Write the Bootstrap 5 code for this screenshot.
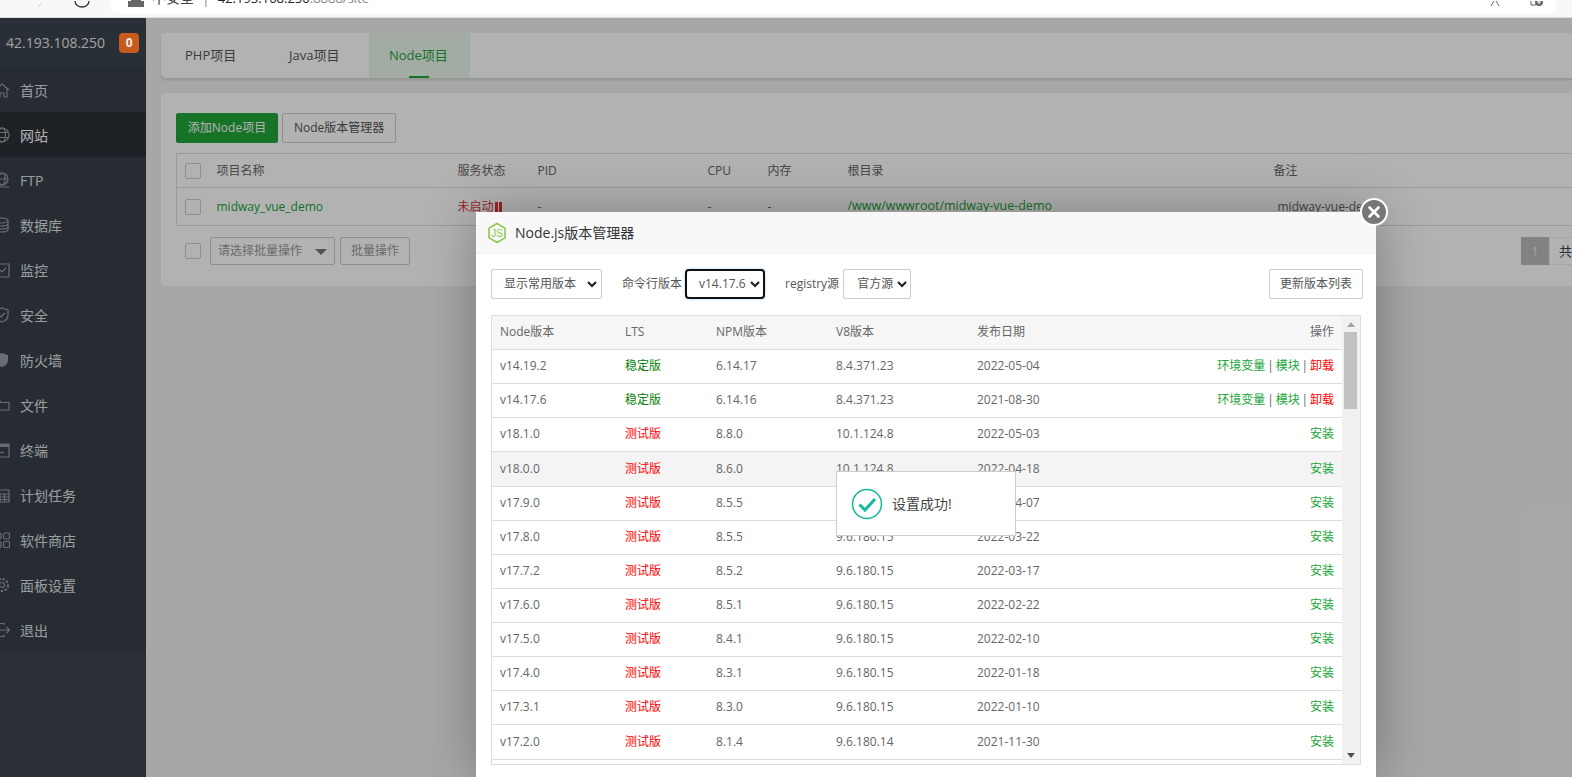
<!DOCTYPE html>
<html lang="zh-CN">
<head>
  <meta charset="UTF-8">
  <meta name="viewport" content="width=device-width, initial-scale=1">
  <title>Node.js版本管理器</title>
  <link rel="stylesheet" href="https://cdn.jsdelivr.net/npm/bootstrap@5.3.0/dist/css/bootstrap.min.css">
  <style>
    html, body { height: 777px; overflow: hidden; }
    body {
      font-family: "Open Sans", "Noto Sans CJK SC", sans-serif;
      font-size: 12px;
      color: #666;
      background: #f0f0f0;
    }
    /* browser chrome, cut off by the screenshot */
    .chrome { height: 18px; background: #f7f8f9; border-bottom: 1px solid #ddd; overflow: hidden; }
    .nav-ico { width: 110px; flex-shrink: 0; }
    .addr {
      flex: 1; height: 13px; margin-right: 16px; background: #fff;
      border-radius: 0 0 6px 6px; overflow: hidden; font-size: 14px; line-height: 18px; color: #444;
    }
    .addr-in { margin-top: -11px; padding-left: 18px; gap: 8px; }
    .addr .sep { color: #888; margin: 0 8px; }
    .addr b { font-weight: 400; font-size: 13px; color: #222; }
    .addr i { font-style: normal; font-size: 13px; color: #888; }
    .addr-icons { margin-left: auto; margin-top: 11px; padding-right: 12px; gap: 30px; }

    .app { height: 759px; overflow: hidden; }

    /* sidebar */
    .side { width: 146px; flex-shrink: 0; background: #38404a; color: #dde0e3; }
    .side-head { height: 51px; padding-left: 6px; background: #3c444e; color: #e6e6e6; font-size: 14px; }
    .side-head .count {
      position: relative; z-index: 2;
      width: 20px; height: 20px; margin-left: 14px; border-radius: 4px;
      background: #c85a1c; color: #eee; font-size: 12px; font-weight: 700; text-align: center; line-height: 20px;
    }
    .side-item { height: 45px; font-size: 14px; gap: 10px; }
    .side-item span { padding-top: 2px; }
    .side-item svg { width: 16px; height: 16px; margin-left: -6px; flex-shrink: 0; }
    .side-item.active { background: #2b3036; color: #fff; }
    .side-foot { background: #3e4650; height: 130px; }

    /* page */
    .main { min-width: 0; overflow: hidden; padding: 15px 0 0 15px; }
    .panel { width: 1454px; background: #fff; border-radius: 5px; }
    .tabs-panel { height: 45px; margin-bottom: 15px; box-shadow: 0 2px 3px rgba(0,0,0,.12); }
    .tab { width: 104px; height: 45px; padding-left: 24px; font-size: 13px; color: #555; line-height: 45px; }
    .tab.active { position: relative; width: 101px; padding-left: 20px; background: #e9f6ec; color: #20a53a; }
    .tab.active::after {
      content: ""; position: absolute; left: 40px; bottom: 0; width: 20px; height: 2px; background: #20a53a;
    }
    .content-panel { height: 193px; padding: 20px 15px 0; }
    .btn-bt { height: 30px; padding: 0 11px; font-size: 12px; border-radius: 2px; line-height: 28px; }
    .btn-green { width: 102px; padding: 0; background: #20a53a; border: 1px solid #20a53a; color: #fff; }
    .btn-plain { background: #fff; border: 1px solid #ccc; color: #555; }
    .site-table { table-layout: fixed; width: 100%; margin: 10px 0 11px; border: 1px solid #ddd; border-bottom-width: 1px; }
    .site-table col:nth-child(1) { width: 32px; }
    .site-table col:nth-child(2) { width: 241px; }
    .site-table col:nth-child(3) { width: 80px; }
    .site-table col:nth-child(4) { width: 170px; }
    .site-table col:nth-child(5) { width: 60px; }
    .site-table col:nth-child(6) { width: 80px; }
    .site-table col:nth-child(7) { width: 426px; }
    .site-table th, .site-table td { padding: 0 8px; border-bottom: 1px solid #ddd; font-weight: 400; white-space: nowrap; }
    .site-table th { height: 34px; color: #666; }
    .site-table td { height: 38px; }
    .site-table .form-check-input, .batch .form-check-input { width: 16px; height: 16px; margin: 0; border-color: #ccc; border-radius: 2px; display: block; }
    .link-green { color: #20a53a; }
    .path-cell { font-size: 12.5px; }
    .site-table td.note-cell { padding-left: 12px; }
    .stopped { color: #d9363e; }
    .bars { display: inline-block; width: 8px; height: 10px; margin-left: 1px; vertical-align: -1px;
      background: linear-gradient(90deg, #d9363e 0 3px, transparent 3px 4px, #d9363e 4px 7px, transparent 7px); }
    .batch { height: 28px; padding-left: 9px; }
    .batch-select {
      width: 125px; height: 28px; margin-left: 9px; padding: 0 7px; border: 1px solid #ccc; border-radius: 2px;
      color: #999; line-height: 26px; position: relative;
    }
    .batch-select::after {
      content: ""; position: absolute; right: 7px; top: 11px;
      border: 6px solid transparent; border-top: 6px solid #777; border-bottom: 0;
    }
    .batch-btn { width: 70px; height: 28px; margin-left: 5px; border: 1px solid #ccc; border-radius: 2px; color: #999; text-align: center; line-height: 26px; }
    .pager { margin-left: auto; font-size: 13px; }
    .pager span { display: block; height: 28px; line-height: 28px; text-align: center; }
    .pager .cur { width: 28px; background: #bbb; color: #e8e8e8; }
    .pager .num { width: 51px; border: 1px solid #eee; padding-left: 9px; text-align: left; color: #444; line-height: 26px; }

    /* layer over the page */
    .shade { position: absolute; left: 0; right: 0; top: 18px; bottom: 0; background: rgba(0,0,0,.3); }
    .layer {
      position: absolute; left: 476px; top: 212px; width: 900px; height: 565px; background: #fff;
      box-shadow: 1px 1px 50px rgba(0,0,0,.3);
    }
    .layer-head { height: 42px; padding-left: 11px; background: #f8f8f8; border-bottom: 1px solid #eee; font-size: 14px; color: #333; gap: 8px; }
    .layer-close {
      position: absolute; left: 884px; top: -14px; width: 28px; height: 28px; border-radius: 50%;
      background: #777; border: 2px solid #fff;
    }
    .layer-body { padding: 15px; }
    .tools { height: 30px; margin-bottom: 16px; color: #555; }
    .tools .form-select {
      width: auto; height: 30px; padding: 0 24px 0 12px; font-size: 12px; color: #555;
      border: 1px solid #ccc; border-radius: 2px; background-size: 10px 10px; background-position: right 4px center;
      background-image: url("data:image/svg+xml,%3csvg xmlns='http://www.w3.org/2000/svg' viewBox='0 0 10 10'%3e%3cpath fill='none' stroke='%23222' stroke-width='2.200' d='M1 3l4 4 4-4'/%3e%3c/svg%3e");
    }
    .tools .form-select.focused { width: 80px; border: 2px solid #101010; border-radius: 4px; box-shadow: 0 0 3px rgba(102,175,233,.6); padding: 0 12px 0 12px; background-position: right 3px center; }
    .tools .form-select.narrow { width: 68px; padding: 0 12px 0 13px; background-position: right 3px center; }
    .tools label { margin: 0 4px 0 20px; }
    .tools label:first-of-type { margin-right: 3px; }
    .btn-update { margin-left: auto; margin-right: -2px; width: 94px; height: 30px; padding: 0; font-size: 12px; text-align: center; line-height: 28px; color: #555; border-radius: 2px; }

    .ver-wrap { height: 450px; width: 870px; border: 1px solid #ddd; overflow: hidden; }
    .ver-table { table-layout: fixed; width: 851px; }
    .ver-table col:nth-child(1) { width: 125px; }
    .ver-table col:nth-child(2) { width: 91px; }
    .ver-table col:nth-child(3) { width: 120px; }
    .ver-table col:nth-child(4), .ver-table col:nth-child(5) { width: 141px; }
    .ver-table th, .ver-table td { padding: 0 8px; border-bottom: 1px solid #ddd; font-weight: 400; white-space: nowrap; box-sizing: border-box; }
    .ver-table th { height: 33px; background: #f6f6f6; color: #666; }
    .ver-table td { height: 34px; color: #666; }
    .ver-table tr.tall td { height: 35px; }
    .ver-table tr.hover td { background: #f4f4f4; }
    .ver-table td.stable { color: #008000; }
    .ver-table td.testing { color: #ff0000; }
    .ops { word-spacing: -1.25px; }
    .ops a { color: #20a53a; text-decoration: none; }
    .ops a.del { color: #ff0000; }
    .scroll { width: 18px; background: #f1f1f1; padding: 0 3px 0 2px; }
    .scroll .up, .scroll .down { width: 0; margin: 6px auto 5px; border: 4px solid transparent; }
    .scroll .up { border-bottom: 5px solid #a3a3a3; border-top: 0; }
    .scroll .down { margin: auto auto 6px; border-top: 5px solid #505050; border-bottom: 0; }
    .scroll .thumb { height: 77px; background: #c1c1c1; }

    .toast-msg {
      position: absolute; left: 836px; top: 471px; width: 180px; height: 65px; background: #fff;
      border: 1px solid #ccc; padding-left: 14px; gap: 9px; font-size: 14px; color: #444;
    }
  </style>
</head>
<body class="position-relative">

  <!-- browser chrome -->
  <div class="chrome d-flex">
    <div class="nav-ico position-relative">
      <svg width="110" height="17" viewBox="0 0 110 17">
        <path d="M38 6l4-4.500" stroke="#ddd" stroke-width="1.300" fill="none"/>
        <path d="M75 0a7 6 0 0 0 14 0" stroke="#333" stroke-width="1.300" fill="none"/>
      </svg>
    </div>
    <div class="addr">
      <div class="addr-in d-flex align-items-center">
        <svg width="16" height="18" viewBox="0 0 16 18"><path d="M0 12h16v6H0z" fill="#666"/><path d="M3 12V8h10v4" fill="#666"/></svg>
        <span>不安全<span class="sep">|</span><b>42.193.108.250</b><i>:8888/site</i></span>
        <div class="addr-icons d-flex">
          <svg width="10" height="6" viewBox="0 0 10 6"><path d="M4 0L1 5M6 0l3 5" stroke="#666" stroke-width="1" fill="none"/></svg>
          <svg width="14" height="6" viewBox="0 0 14 6"><path d="M1 0v4h5" stroke="#666" stroke-width="1" fill="none"/><circle cx="9" cy="1" r="4" fill="#666"/><path d="M7 1h4M9 0v3" stroke="#fff" stroke-width="1"/></svg>
        </div>
      </div>
    </div>
  </div>

  <div class="app d-flex">
    <!-- sidebar -->
    <aside class="side d-flex flex-column">
      <div class="side-head d-flex align-items-center">
        <span>42.193.108.250</span><span class="count">0</span>
      </div>
      <div id="menu"></div>
      <div class="side-foot"></div>
    </aside>

    <!-- page -->
    <main class="main flex-grow-1">
      <div class="panel tabs-panel d-flex">
        <div class="tab">PHP项目</div>
        <div class="tab">Java项目</div>
        <div class="tab active">Node项目</div>
      </div>
      <div class="panel content-panel">
        <div class="d-flex gap-1">
          <button type="button" class="btn btn-bt btn-green">添加Node项目</button>
          <button type="button" class="btn btn-bt btn-plain">Node版本管理器</button>
        </div>
        <table class="site-table">
          <colgroup><col><col><col><col><col><col><col><col></colgroup>
          <tr>
            <th><input class="form-check-input" type="checkbox"></th>
            <th>项目名称</th><th>服务状态</th><th>PID</th><th>CPU</th><th>内存</th><th>根目录</th><th>备注</th>
          </tr>
          <tr>
            <td><input class="form-check-input" type="checkbox"></td>
            <td class="link-green">midway_vue_demo</td>
            <td class="stopped">未启动<span class="bars"></span></td>
            <td>-</td><td>-</td><td>-</td>
            <td class="link-green path-cell">/www/wwwroot/midway-vue-demo</td>
            <td class="note-cell">midway-vue-demo</td>
          </tr>
        </table>
        <div class="batch d-flex align-items-center">
          <input class="form-check-input" type="checkbox">
          <div class="batch-select">请选择批量操作</div>
          <div class="batch-btn">批量操作</div>
          <div class="pager d-flex"><span class="cur">1</span><span class="num">共1条</span></div>
        </div>
      </div>
    </main>
  </div>

  <!-- modal layer -->
  <div class="shade"></div>
  <div class="layer">
    <div class="layer-head d-flex align-items-center">
      <svg width="20" height="22" viewBox="0 0 20 22">
        <path d="M10 1.500l8 4.600v9.800l-8 4.600-8-4.600V6.100z" fill="none" stroke="#8cc84b" stroke-width="1.600"/>
        <text x="10" y="15" text-anchor="middle" font-size="10" font-family="Liberation Sans" fill="#8cc84b">JS</text>
      </svg>
      <span>Node.js版本管理器</span>
    </div>
    <div class="layer-close">
      <svg class="d-block" width="24" height="24" viewBox="0 0 24 24"><path d="M7.500 7.500l9 9m0-9l-9 9" stroke="#fff" stroke-width="2.600" stroke-linecap="round"/></svg>
    </div>
    <div class="layer-body">
      <div class="tools d-flex align-items-center">
        <select class="form-select"><option>显示常用版本</option></select>
        <label>命令行版本</label>
        <select class="form-select focused"><option>v14.17.6</option></select>
        <label>registry源</label>
        <select class="form-select narrow"><option>官方源</option></select>
        <button type="button" class="btn btn-plain btn-update">更新版本列表</button>
      </div>
      <div class="ver-wrap d-flex">
        <table class="ver-table align-self-start">
          <colgroup><col><col><col><col><col><col></colgroup>
          <thead><tr><th>Node版本</th><th>LTS</th><th>NPM版本</th><th>V8版本</th><th>发布日期</th><th class="text-end">操作</th></tr></thead>
          <tbody id="versions"></tbody>
        </table>
        <div class="scroll d-flex flex-column">
          <div class="up"></div>
          <div class="thumb"></div>
          <div class="down"></div>
        </div>
      </div>
    </div>
  </div>

  <!-- toast -->
  <div class="toast-msg d-flex align-items-center">
    <svg width="32" height="32" viewBox="0 0 32 32">
      <circle cx="16" cy="16" r="14.500" fill="none" stroke="#16b99c" stroke-width="1.500"/>
      <path d="M8.500 16.500l5.500 5.500 10-11" fill="none" stroke="#16b99c" stroke-width="3"/>
    </svg>
    <span>设置成功!</span>
  </div>

<script src="https://cdn.jsdelivr.net/npm/bootstrap@5.3.0/dist/js/bootstrap.bundle.min.js"></script>
<script>
  // sidebar entries
  const s = 'fill="none" stroke="#989ca1" stroke-width="1.200"';
  const menu = [
    ["首页", `<path d="M1 8l7-6 7 6M3 7v8h3v-4h4v4h3V7" ${s}/>`],
    ["网站", `<circle cx="8" cy="8" r="7" ${s}/><ellipse cx="8" cy="8" rx="3.500" ry="7" ${s}/><path d="M1 5.500h14M1 10.500h14" ${s}/>`],
    ["FTP", `<circle cx="8" cy="7" r="6" ${s}/><ellipse cx="8" cy="7" rx="3" ry="6" ${s}/><path d="M2 7h12M1 15h14" ${s}/>`],
    ["数据库", `<ellipse cx="7" cy="3.500" rx="7" ry="2.500" ${s}/><path d="M0 3.500v9c0 1.400 3 2.500 7 2.500s7-1.100 7-2.500v-9M0 6.500c0 1.400 3 2.500 7 2.500s7-1.100 7-2.500M0 9.500c0 1.400 3 2.500 7 2.500s7-1.100 7-2.500" ${s}/>`],
    ["监控", `<path d="M1 2h14v13H1zM3 11l3-3 2 2 4-4" ${s}/>`],
    ["安全", `<path d="M8 1l6 2v5c0 4-3 6-6 7-3-1-6-3-6-7V3zM5 8l2 2 4-4" ${s}/>`],
    ["防火墙", `<path d="M8 1l6 2v5c0 4-3 6-6 7-3-1-6-3-6-7V3z" fill="#989ca1"/>`],
    ["文件", `<path d="M1 13V4h5l1 1.500h8V13z" ${s}/>`],
    ["终端", `<path d="M1 2h14v13H1z" ${s}/><path d="M1 2h14v3H1z" fill="#989ca1"/><path d="M6 10.500h4" ${s}/>`],
    ["计划任务", `<path d="M2 3h13v12H2zM2 7h13M2 10h13M2 12.500h13M6 7v8M10.500 7v8" ${s}/>`],
    ["软件商店", `<rect x="1" y="1" width="6" height="6" rx="1.500" ${s}/><rect x="9.500" y="1" width="6" height="6" rx="1.500" ${s}/><rect x="1" y="9.500" width="6" height="6" rx="1.500" ${s}/><rect x="9.500" y="9.500" width="6" height="6" rx="1.500" ${s}/>`],
    ["面板设置", `<circle cx="8" cy="8" r="2.500" ${s}/><circle cx="8" cy="8" r="6" stroke-dasharray="2.500 1.500" fill="none" stroke="#989ca1" stroke-width="2"/>`],
    ["退出", `<path d="M10 3V1.500H1v13h9V13M6 8h9M12.500 5l3 3-3 3" ${s}/>`]
  ];
  document.getElementById("menu").innerHTML = menu.map((m, i) =>
    `<div class="side-item d-flex align-items-center${i === 1 ? " active" : ""}"><svg viewBox="0 0 16 16">${m[1]}</svg><span>${m[0]}</span></div>`
  ).join("");

  // node versions: version, lts, npm, v8, date
  const versions = [
    ["v14.19.2", 1, "6.14.17", "8.4.371.23", "2022-05-04"],
    ["v14.17.6", 1, "6.14.16", "8.4.371.23", "2021-08-30"],
    ["v18.1.0", 0, "8.8.0", "10.1.124.8", "2022-05-03"],
    ["v18.0.0", 0, "8.6.0", "10.1.124.8", "2022-04-18"],
    ["v17.9.0", 0, "8.5.5", "9.6.180.15", "2022-04-07"],
    ["v17.8.0", 0, "8.5.5", "9.6.180.15", "2022-03-22"],
    ["v17.7.2", 0, "8.5.2", "9.6.180.15", "2022-03-17"],
    ["v17.6.0", 0, "8.5.1", "9.6.180.15", "2022-02-22"],
    ["v17.5.0", 0, "8.4.1", "9.6.180.15", "2022-02-10"],
    ["v17.4.0", 0, "8.3.1", "9.6.180.15", "2022-01-18"],
    ["v17.3.1", 0, "8.3.0", "9.6.180.15", "2022-01-10"],
    ["v17.2.0", 0, "8.1.4", "9.6.180.14", "2021-11-30"]
  ];
  document.getElementById("versions").innerHTML = versions.map((v, i) => {
    const cls = [i === 3 ? "hover" : "", i === 3 || i === 11 ? "tall" : ""].join(" ");
    const ops = v[1]
      ? '<a href="#">环境变量</a> | <a href="#">模块</a> | <a href="#" class="del">卸载</a>'
      : '<a href="#">安装</a>';
    return `<tr class="${cls}"><td>${v[0]}</td><td class="${v[1] ? "stable" : "testing"}">${v[1] ? "稳定版" : "测试版"}</td>` +
      `<td>${v[2]}</td><td>${v[3]}</td><td>${v[4]}</td><td class="text-end ops">${ops}</td></tr>`;
  }).join("");
</script>
</body>
</html>
